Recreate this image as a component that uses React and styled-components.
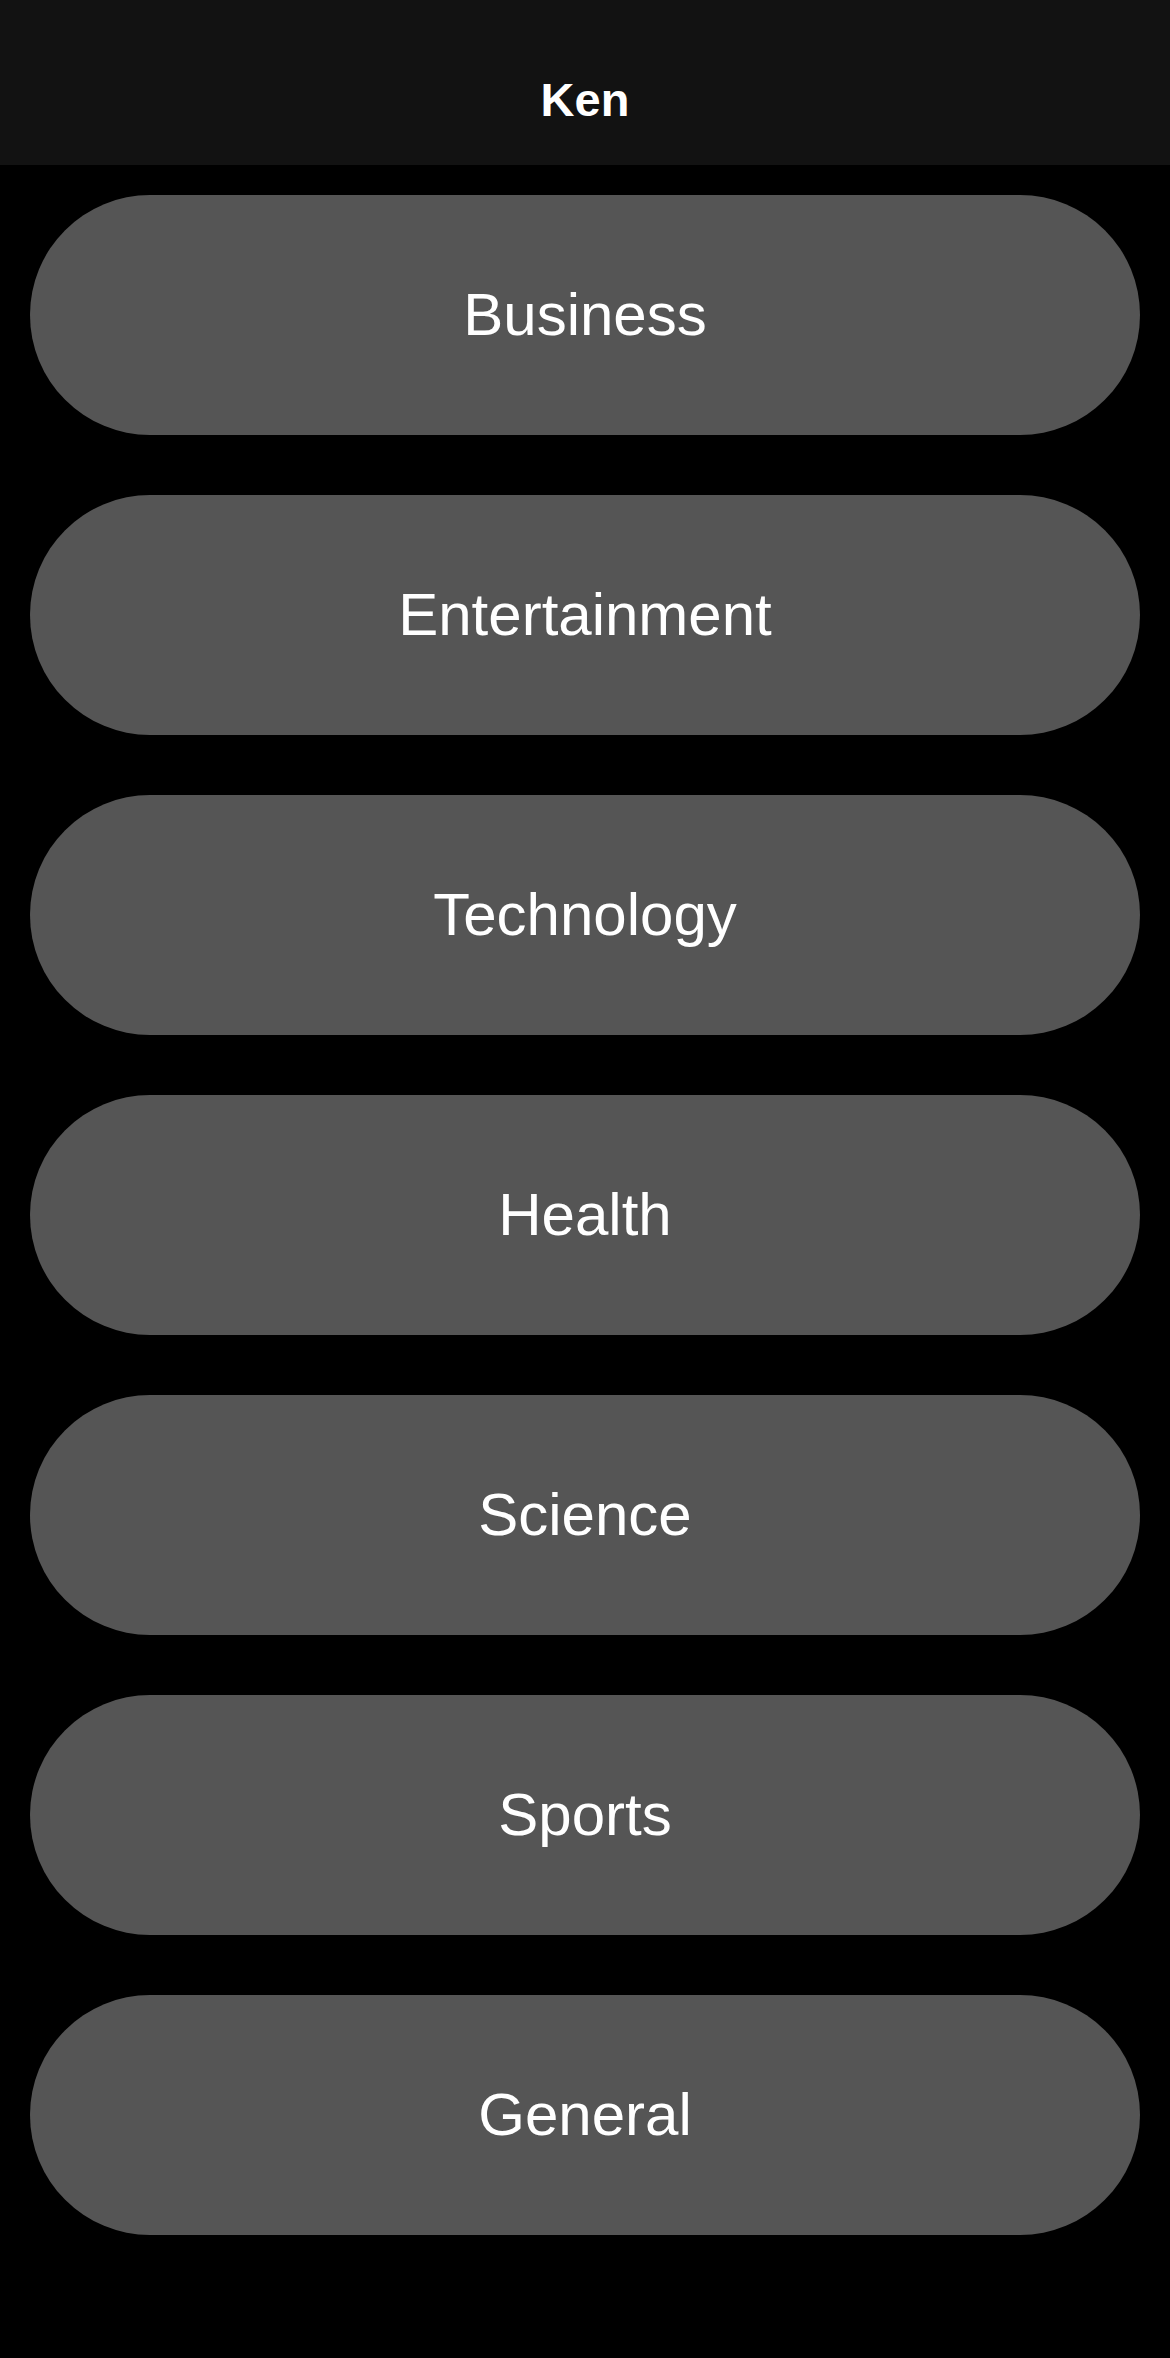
import styled, { createGlobalStyle } from 'styled-components';

const GlobalStyle = createGlobalStyle`
  html, body {
    margin: 0;
    padding: 0;
    background-color: #000;
  }
  body {
    font-family: 'Liberation Sans', Arial, sans-serif;
    -webkit-font-smoothing: antialiased;
  }
`;

const Screen = styled.div`
  display: flex;
  flex-direction: column;
  min-height: 2358px;
  background-color: #000;
`;

const Header = styled.header`
  display: flex;
  justify-content: center;
  align-items: flex-start;
  height: 165px;
  padding-top: 76px;
  box-sizing: border-box;
  background-color: #121212;
`;

const Title = styled.h1`
  margin: 0;
  color: #fff;
  font-size: 47px;
  line-height: 47px;
  font-weight: bold;
`;

const CategoryList = styled.nav`
  display: flex;
  flex-direction: column;
  gap: 60px;
  padding: 30px;
`;

const CategoryBtn = styled.button`
  display: flex;
  justify-content: center;
  align-items: center;
  width: 100%;
  height: 240px;
  border: none;
  border-radius: 120px;
  background-color: #555;
  color: #fff;
  font-family: inherit;
  font-size: 60px;
  line-height: 60px;
  cursor: pointer;
`;

const categories = ['Business', 'Entertainment', 'Technology', 'Health', 'Science', 'Sports', 'General'];

const App = () => (
  <Screen>
    <GlobalStyle />
    <Header>
      <Title>Ken</Title>
    </Header>
    <CategoryList>
      {categories.map((name) => (
        <CategoryBtn key={name} type='button' aria-label={name}>
          {name}
        </CategoryBtn>
      ))}
    </CategoryList>
  </Screen>
);

export default App;
